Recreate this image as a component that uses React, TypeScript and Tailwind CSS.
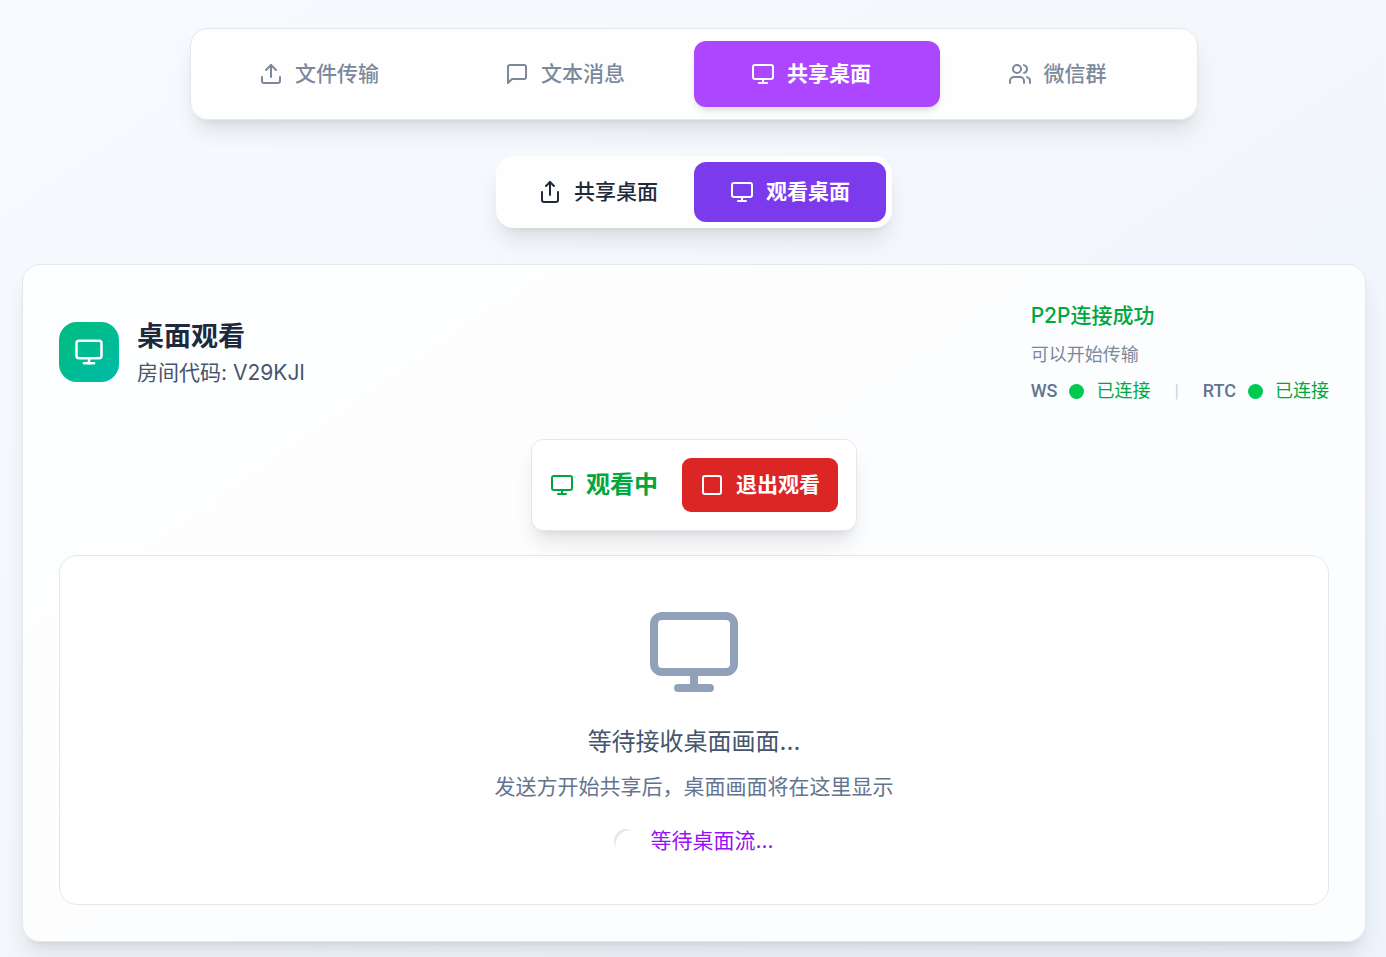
import React from 'react';
import { Monitor, Share, Square, Upload, Users } from 'lucide-react';

const MessageIcon: React.FC<{ className?: string }> = ({ className }) => (
  <svg
    className={className}
    viewBox="0 0 24 24"
    fill="none"
    stroke="currentColor"
    strokeWidth={2}
    strokeLinecap="round"
    strokeLinejoin="round"
    aria-hidden="true"
  >
    <path d="M21 15a2 2 0 0 1-2 2H7l-4 4V5a2 2 0 0 1 2-2h14a2 2 0 0 1 2 2z" />
  </svg>
);

const tabs = [
  { id: 'file', label: '文件传输', icon: Upload },
  { id: 'message', label: '文本消息', icon: MessageIcon },
  { id: 'desktop', label: '共享桌面', icon: Monitor },
  { id: 'wechat', label: '微信群', icon: Users },
];

const modes = [
  { id: 'share', label: '共享桌面', icon: Share },
  { id: 'view', label: '观看桌面', icon: Monitor },
];

const connections = [
  { name: 'WS', status: '已连接' },
  { name: 'RTC', status: '已连接' },
];

const App: React.FC = () => {
  const activeTab = 'desktop';
  const activeMode = 'view';

  return (
    <div className="min-h-screen bg-gradient-to-br from-[#f7fafe] via-[#f3f7fc] to-[#edf4fe] pt-7 pb-3.5 pl-[22px] pr-5 font-[Inter,'Noto_Sans_CJK_SC',sans-serif] text-[21px] leading-[30px] text-slate-800">
      {/* Top tabs */}
      <nav className="mx-auto grid max-w-[1008px] grid-cols-4 rounded-[18px] border border-gray-200 bg-white/90 px-[11px] py-3 shadow-[0_15px_22px_-4px_rgb(0_0_0/0.1),0_6px_9px_-6px_rgb(0_0_0/0.1)]">
        {tabs.map(({ id, label, icon: Icon }) => (
          <button
            key={id}
            type="button"
            className={`flex h-[66px] items-center justify-center gap-3 rounded-xl pr-3 ${
              id === activeTab
                ? 'bg-[#ad46ff] font-semibold text-white shadow-[0_6px_9px_-2px_rgb(0_0_0/0.1),0_3px_6px_-3px_rgb(0_0_0/0.1)]'
                : 'font-medium text-[#7c899c]'
            }`}
          >
            <Icon className="h-6 w-6" />
            <span>{label}</span>
          </button>
        ))}
      </nav>

      {/* Share / view switch */}
      <div className="mt-9 flex justify-center">
        <div className="flex rounded-[18px] bg-white/90 p-1.5 shadow-[0_15px_22px_-4px_rgb(0_0_0/0.1),0_6px_9px_-6px_rgb(0_0_0/0.1)]">
          {modes.map(({ id, label, icon: Icon }) => (
            <button
              key={id}
              type="button"
              className={`flex h-[60px] items-center gap-3 rounded-xl px-9 ${
                id === activeMode ? 'bg-[#7c3aed] font-semibold text-white' : 'font-medium text-gray-800'
              }`}
            >
              <Icon className="h-6 w-6" />
              <span>{label}</span>
            </button>
          ))}
        </div>
      </div>

      {/* Desktop viewer */}
      <main className="mt-9 rounded-[18px] border border-gray-200 bg-white/80 p-9 shadow-[0_15px_22px_-4px_rgb(0_0_0/0.1),0_6px_9px_-6px_rgb(0_0_0/0.1)]">
        <header className="flex items-center justify-between">
          <div className="flex items-center gap-[18px]">
            <div className="flex h-[60px] w-[60px] items-center justify-center rounded-[18px] bg-gradient-to-br from-emerald-500 to-teal-500 text-white">
              <Monitor className="h-[30px] w-[30px]" />
            </div>
            <div>
              <h1 className="text-[27px] leading-[42px] font-semibold">桌面观看</h1>
              <p className="text-slate-600">房间代码: V29KJI</p>
            </div>
          </div>

          <div className="flex flex-col gap-3">
            <div className="font-medium text-green-600">P2P连接成功</div>
            <div className="text-[18px] leading-6 text-[#7c899c]">可以开始传输</div>
            <div className="flex items-center gap-6 font-[Roboto,'Noto_Sans_CJK_SC',sans-serif] text-[18px] leading-6">
              {connections.map((item, index) => (
                <React.Fragment key={item.name}>
                  {index > 0 && <span className="text-slate-300">|</span>}
                  <div className="flex items-center gap-3">
                    <span className="font-medium text-slate-500">{item.name}</span>
                    <span className="h-[15px] w-[15px] rounded-full bg-green-500" />
                    <span className="text-green-600">{item.status}</span>
                  </div>
                </React.Fragment>
              ))}
            </div>
          </div>
        </header>

        <div className="mt-9 flex justify-center">
          <div className="flex items-center gap-6 rounded-xl border border-gray-200 bg-white p-[18px] shadow-[0_15px_22px_-4px_rgb(0_0_0/0.1),0_6px_9px_-6px_rgb(0_0_0/0.1)]">
            <div className="flex items-center gap-3 text-green-600">
              <Monitor className="h-6 w-6" />
              <span className="text-2xl font-semibold">观看中</span>
            </div>
            <button
              type="button"
              className="flex h-[54px] items-center gap-3 rounded-[9px] bg-[#dc2626] px-[18px] font-semibold text-white"
            >
              <Square className="h-6 w-6" />
              <span>退出观看</span>
            </button>
          </div>
        </div>

        <section className="mt-6 flex flex-col items-center rounded-[18px] border border-gray-200 bg-white px-6 py-12">
          <Monitor className="h-24 w-24 text-slate-400" />
          <p className="mt-6 text-2xl leading-9 text-slate-600">等待接收桌面画面...</p>
          <p className="mt-3 text-slate-500">发送方开始共享后，桌面画面将在这里显示</p>
          <div className="mt-6 flex items-center gap-3">
            <div className="h-6 w-6 -rotate-45 rounded-full border-t-[3px] border-gray-200" />
            <span className="text-purple-600">等待桌面流...</span>
          </div>
        </section>
      </main>
    </div>
  );
};

export default App;
